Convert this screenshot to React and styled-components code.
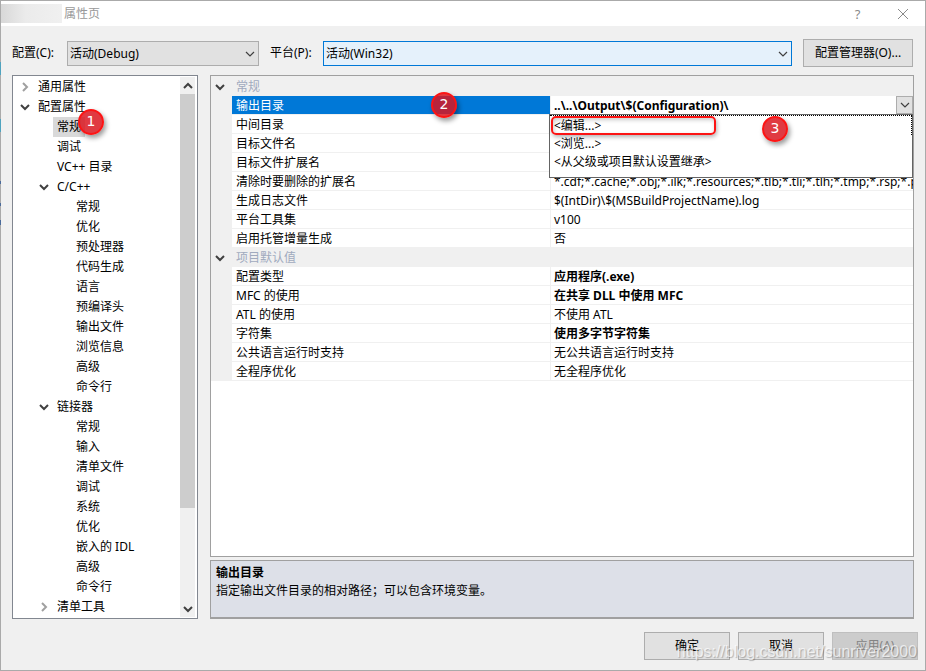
import React, { useState } from "react";
import styled, { createGlobalStyle } from "styled-components";

const treeItems = [
  { id: 1, label: "通用属性", level: 0, state: "closed" },
  { id: 2, label: "配置属性", level: 0, state: "open" },
  { id: 3, label: "常规", level: 1, badge: "1" },
  { id: 4, label: "调试", level: 1 },
  { id: 5, label: "VC++ 目录", level: 1 },
  { id: 6, label: "C/C++", level: 1, state: "open" },
  { id: 7, label: "常规", level: 2 },
  { id: 8, label: "优化", level: 2 },
  { id: 9, label: "预处理器", level: 2 },
  { id: 10, label: "代码生成", level: 2 },
  { id: 11, label: "语言", level: 2 },
  { id: 12, label: "预编译头", level: 2 },
  { id: 13, label: "输出文件", level: 2 },
  { id: 14, label: "浏览信息", level: 2 },
  { id: 15, label: "高级", level: 2 },
  { id: 16, label: "命令行", level: 2 },
  { id: 17, label: "链接器", level: 1, state: "open" },
  { id: 18, label: "常规", level: 2 },
  { id: 19, label: "输入", level: 2 },
  { id: 20, label: "清单文件", level: 2 },
  { id: 21, label: "调试", level: 2 },
  { id: 22, label: "系统", level: 2 },
  { id: 23, label: "优化", level: 2 },
  { id: 24, label: "嵌入的 IDL", level: 2 },
  { id: 25, label: "高级", level: 2 },
  { id: 26, label: "命令行", level: 2 },
  { id: 27, label: "清单工具", level: 1, state: "closed" },
];

const groups = [
  {
    title: "常规",
    rows: [
      { name: "中间目录" },
      { name: "目标文件名" },
      { name: "目标文件扩展名" },
      {
        name: "清除时要删除的扩展名",
        value:
          "*.cdf;*.cache;*.obj;*.ilk;*.resources;*.tlb;*.tli;*.tlh;*.tmp;*.rsp;*.pgc",
      },
      { name: "生成日志文件", value: "$(IntDir)\\$(MSBuildProjectName).log" },
      { name: "平台工具集", value: "v100" },
      { name: "启用托管增量生成", value: "否" },
    ],
  },
  {
    title: "项目默认值",
    rows: [
      { name: "配置类型", value: "应用程序(.exe)", bold: true },
      { name: "MFC 的使用", value: "在共享 DLL 中使用 MFC", bold: true },
      { name: "ATL 的使用", value: "不使用 ATL" },
      { name: "字符集", value: "使用多字节字符集", bold: true },
      { name: "公共语言运行时支持", value: "无公共语言运行时支持" },
      { name: "全程序优化", value: "无全程序优化" },
    ],
  },
];

const Chevron = ({ dir = "down", color = "#404040", weight = 2 }) => {
  const paths = {
    down: "M1 3 L5 7 L9 3",
    up: "M1 7 L5 3 L9 7",
    right: "M3 1 L7 5 L3 9",
  };
  return (
    <svg width="10" height="10" viewBox="0 0 10 10" aria-hidden="true">
      <path d={paths[dir]} fill="none" stroke={color} strokeWidth={weight} />
    </svg>
  );
};

const Combo = ({ id, options, active }) => (
  <ComboBox $active={active}>
    <select id={id}>
      {options.map((option) => (
        <option key={option}>{option}</option>
      ))}
    </select>
    <ComboArrow>
      <Chevron weight={1.2} />
    </ComboArrow>
  </ComboBox>
);

const Tree = () => {
  const [selected, setSelected] = useState(3);
  return (
    <TreePanel>
      <TreeList role="tree" aria-label="属性">
        {treeItems.map((item) => (
          <TreeRow
            key={item.id}
            role="treeitem"
            aria-selected={item.id === selected}
            $level={item.level}
          >
            <Toggle>
              {item.state === "open" && <Chevron />}
              {item.state === "closed" && <Chevron dir="right" color="#a0a0a0" />}
            </Toggle>
            <TreeLabel
              $selected={item.id === selected}
              onClick={() => setSelected(item.id)}
            >
              {item.label}
            </TreeLabel>
            {item.badge && <TreeBadge>{item.badge}</TreeBadge>}
          </TreeRow>
        ))}
      </TreeList>
      <ScrollBar aria-hidden="true">
        <ScrollArrow>
          <Chevron dir="up" />
        </ScrollArrow>
        <ScrollThumb />
        <ScrollRest />
        <ScrollArrow>
          <Chevron />
        </ScrollArrow>
      </ScrollBar>
    </TreePanel>
  );
};

const OutputRow = () => {
  const [value, setValue] = useState("..\\..\\Output\\$(Configuration)\\");
  const [open, setOpen] = useState(true);
  return (
    <tr>
      <Gutter />
      <NameCell $selected>
        <label htmlFor="output">输出目录</label>
        <NameBadge>2</NameBadge>
      </NameCell>
      <EditCell>
        <EditLine>
          <input
            id="output"
            value={value}
            onChange={(e) => setValue(e.target.value)}
          />
          <button aria-label="展开" onClick={() => setOpen(!open)}>
            <Chevron weight={1.2} />
          </button>
        </EditLine>
        {open && (
          <Popup role="listbox" aria-label="输出目录">
            <Option role="option" aria-selected="true" $focused>
              &lt;编辑...&gt;
              <Highlight />
              <OptionBadge>3</OptionBadge>
            </Option>
            <Option role="option" aria-selected="false">
              &lt;浏览...&gt;
            </Option>
            <Option role="option" aria-selected="false">
              &lt;从父级或项目默认设置继承&gt;
            </Option>
          </Popup>
        )}
      </EditCell>
    </tr>
  );
};

const PropertyGrid = () => (
  <GridPanel>
    <GridTable>
      <colgroup>
        <col className="gutter" />
        <col className="name" />
        <col />
      </colgroup>
      {groups.map((group, index) => (
        <tbody key={group.title}>
          <tr>
            <Gutter>
              <Chevron />
            </Gutter>
            <GroupCell colSpan={2}>{group.title}</GroupCell>
          </tr>
          {index === 0 && <OutputRow />}
          {group.rows.map((row) => (
            <tr key={row.name}>
              <Gutter />
              <NameCell>{row.name}</NameCell>
              <ValueCell $bold={row.bold}>{row.value}</ValueCell>
            </tr>
          ))}
        </tbody>
      ))}
    </GridTable>
  </GridPanel>
);

const App = () => {
  return (
    <Dialog>
      <GlobalStyle />
      <EdgeMarks width="1" height="230" viewBox="0 0 1 230" aria-hidden="true">
        <path d="M0.5 62 V75 M0.5 119 V132" stroke="#4fa3bf" />
        <path d="M0.5 181 V184 M0.5 203 V206 M0.5 220 V225" stroke="#4a6a9a" />
      </EdgeMarks>
      <TitleBar>
        <TitleBlank />
        <h1>属性页</h1>
        <CaptionButton aria-label="帮助">?</CaptionButton>
        <CaptionButton aria-label="关闭">
          <svg width="12" height="12" viewBox="0 0 12 12">
            <path d="M1 1 L11 11 M11 1 L1 11" stroke="#8a8a8a" fill="none" />
          </svg>
        </CaptionButton>
      </TitleBar>
      <Toolbar>
        <ConfigField>
          <label htmlFor="config">配置(C):</label>
          <Combo id="config" options={["活动(Debug)", "Debug", "Release"]} />
        </ConfigField>
        <PlatformField>
          <label htmlFor="platform">平台(P):</label>
          <Combo id="platform" options={["活动(Win32)", "Win32"]} active />
        </PlatformField>
        <ManagerButton>配置管理器(O)...</ManagerButton>
      </Toolbar>
      <Body>
        <Tree />
        <Detail>
          <PropertyGrid />
          <Description>
            <h2>输出目录</h2>
            <p>指定输出文件目录的相对路径；可以包含环境变量。</p>
          </Description>
        </Detail>
      </Body>
      <Footer>
        <Button>确定</Button>
        <Button>取消</Button>
        <Button disabled>应用(A)</Button>
        <Watermark>https://blog.csdn.net/sunriver2000</Watermark>
      </Footer>
    </Dialog>
  );
};

export default App;

const GlobalStyle = createGlobalStyle`
  * {
    box-sizing: border-box;
  }
  body {
    margin: 0;
    background: #f0f0f0;
    color: #000;
  }
  body, button, input, select {
    font-family: "Noto Sans", "Noto Sans CJK SC", sans-serif;
    font-size: 12px;
    line-height: 18px;
  }
  h1, h2, p, ul {
    margin: 0;
    padding: 0;
    font-size: 12px;
  }
  svg {
    display: block;
  }
`;

const Dialog = styled.div`
  display: flex;
  flex-direction: column;
  min-height: 100vh;
  border: 1px solid #aaa;
`;

/* slivers of the window behind the dialog */
const EdgeMarks = styled.svg`
  position: absolute;
  top: 0;
  left: 0;
`;

const TitleBar = styled.header`
  display: flex;
  align-items: center;
  height: 25px;
  background: #fff;
  h1 {
    flex-grow: 1;
    color: #999;
    font-weight: 400;
  }
`;

const TitleBlank = styled.div`
  width: 61px;
  height: 19px;
  margin-right: 2px;
  background: linear-gradient(to right, #d8d8d8, #ebebeb 40%, #f0f0f0);
`;

const CaptionButton = styled.button`
  display: flex;
  align-items: center;
  justify-content: center;
  width: 45px;
  height: 25px;
  padding: 0;
  border: 0;
  background: none;
  color: #8a8a8a;
  font-size: 13px;
`;

const Toolbar = styled.div`
  display: flex;
  align-items: center;
  gap: 11px;
  padding: 13px 12px 8px 11px;
  label {
    flex-shrink: 0;
  }
`;

const ConfigField = styled.div`
  display: flex;
  align-items: center;
  width: 247px;
  label {
    width: 55px;
  }
`;

const PlatformField = styled(ConfigField)`
  flex-grow: 1;
  label {
    width: 53px;
  }
`;

const ComboBox = styled.div`
  position: relative;
  flex-grow: 1;
  select {
    display: block;
    width: 100%;
    height: 25px;
    padding: 2px 20px 0 2px;
    border: 1px solid ${(props) => (props.$active ? "#0078d7" : "#adadad")};
    border-radius: 0;
    background: ${(props) => (props.$active ? "#e5f1fb" : "#e1e1e1")};
    color: #000;
    appearance: none;
  }
`;

const ComboArrow = styled.span`
  position: absolute;
  top: 8px;
  right: 4px;
  pointer-events: none;
`;

const Button = styled.button`
  width: 86px;
  height: 28px;
  padding: 0;
  border: 1px solid #adadad;
  background: #e1e1e1;
  color: #000;
  &:disabled {
    border-color: #bfbfbf;
    background: #ccc;
    color: #838383;
  }
`;

const ManagerButton = styled(Button)`
  width: 110px;
`;

const Body = styled.main`
  display: flex;
  flex-grow: 1;
  gap: 12px;
  padding: 0 11px;
`;

const TreePanel = styled.nav`
  display: flex;
  flex-shrink: 0;
  width: 186px;
  padding: 1px 2px 1px 0;
  border: 1px solid #828790;
  background: #fff;
`;

const TreeList = styled.ul`
  flex-grow: 1;
  list-style: none;
`;

const TreeRow = styled.li`
  position: relative;
  display: flex;
  align-items: center;
  height: 20px;
  padding-left: ${(props) => 7 + props.$level * 19}px;
`;

const Toggle = styled.span`
  width: 14px;
  height: 10px;
`;

const TreeLabel = styled.span`
  padding: 1px 4px;
  background: ${(props) => (props.$selected ? "#d9d9d9" : "none")};
  cursor: default;
`;

const ScrollBar = styled.div`
  display: flex;
  flex-direction: column;
  width: 15px;
  background: #f0f0f0;
`;

const ScrollArrow = styled.div`
  display: flex;
  align-items: center;
  justify-content: center;
  height: 17px;
`;

const ScrollThumb = styled.div`
  flex: 9;
  background: #cdcdcd;
`;

const ScrollRest = styled.div`
  flex: 2;
`;

const Badge = styled.span`
  position: absolute;
  z-index: 2;
  width: 26px;
  height: 26px;
  border: 2px solid #fc1414;
  border-radius: 50%;
  background: rgba(218, 20, 30, 0.84);
  box-shadow: 2px 3px 5px rgba(0, 0, 0, 0.4);
  color: #fff;
  font-family: "DejaVu Sans", sans-serif;
  font-size: 14px;
  font-weight: 400;
  line-height: 21px;
  text-align: center;
`;

const TreeBadge = styled(Badge)`
  top: -8px;
  left: 65px;
`;

const NameBadge = styled(Badge)`
  top: -4px;
  left: 199px;
`;

const OptionBadge = styled(Badge)`
  top: 0;
  left: 212px;
`;

const Detail = styled.section`
  display: flex;
  flex-direction: column;
  flex-grow: 1;
  gap: 3px;
  min-width: 0;
`;

const GridPanel = styled.div`
  flex-grow: 1;
  border: 1px solid #a0a0a0;
  background: #fff;
`;

const GridTable = styled.table`
  width: 100%;
  table-layout: fixed;
  border-spacing: 0;
  border-top: 1px solid #f0f0f0;
  .gutter {
    width: 21px;
  }
  .name {
    width: 318px;
  }
  td {
    position: relative;
    height: 19px;
    line-height: 16px;
    white-space: nowrap;
  }
`;

const Gutter = styled.td`
  padding: 0 4px;
  background: #f0f0f0;
`;

const GroupCell = styled.td`
  padding: 0 4px;
  background: #f0f0f0;
  color: #a0aabe;
`;

const NameCell = styled.td`
  padding: 2px 4px 0;
  border-bottom: 1px solid #f0f0f0;
  background: ${(props) => (props.$selected ? "#0078d7" : "#fff")};
  color: ${(props) => (props.$selected ? "#fff" : "#000")};
`;

const ValueCell = styled.td`
  overflow: hidden;
  padding: 2px 0 0 3px;
  border-bottom: 1px solid #f0f0f0;
  border-left: 1px solid #f0f0f0;
  font-weight: ${(props) => (props.$bold ? 700 : 400)};
`;

const EditCell = styled(ValueCell)`
  overflow: visible;
  padding-top: 0;
`;

const EditLine = styled.div`
  display: flex;
  height: 18px;
  input {
    flex-grow: 1;
    min-width: 0;
    padding: 2px 0 0;
    border: 0;
    outline: 0;
    background: none;
    font-weight: 700;
    line-height: 16px;
  }
  button {
    display: flex;
    align-items: center;
    justify-content: center;
    width: 17px;
    padding: 0;
    border: 1px solid #adadad;
    background: #e1e1e1;
  }
`;

const Popup = styled.ul`
  position: absolute;
  z-index: 1;
  top: 100%;
  right: 0;
  left: -2px;
  padding: 0 0 6px;
  border: 1px solid #646464;
  background: #fff;
  list-style: none;
`;

const Option = styled.li`
  position: relative;
  height: 18px;
  padding-left: 4px;
  line-height: 18px;
  ${(props) =>
    props.$focused &&
    `
    height: 20px;
    padding-top: 1px;
    border-top: 1px dotted #000;
    border-right: 1px dotted #000;
  `}
`;

const Highlight = styled.span`
  position: absolute;
  top: 0;
  left: 1px;
  width: 165px;
  height: 19px;
  border: 2px solid #fc1414;
  border-radius: 5px;
  box-shadow: 1px 2px 4px rgba(0, 0, 0, 0.3), inset 1px 2px 4px rgba(0, 0, 0, 0.2);
`;

const Description = styled.div`
  padding: 3px 5px 17px;
  border: 1px solid #a0a0a0;
  border-bottom-width: 2px;
  background: #dde0e8;
`;

const Footer = styled.footer`
  position: relative;
  display: flex;
  justify-content: flex-end;
  gap: 8px;
  padding: 13px 7px 10px;
`;

const Watermark = styled.span`
  position: absolute;
  right: 8px;
  bottom: 9px;
  color: rgba(255, 255, 255, 0.7);
  font-family: "Liberation Sans", Arial, sans-serif;
  font-size: 16px;
  text-shadow: 1px 1px 1px rgba(0, 0, 0, 0.25);
  pointer-events: none;
`;
